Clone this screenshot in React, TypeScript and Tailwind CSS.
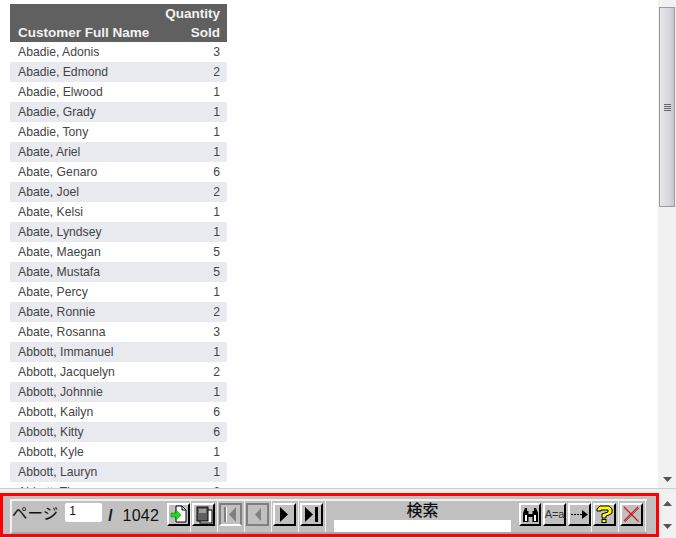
const rows: [string, number][] = [
  ["Abadie, Adonis", 3], ["Abadie, Edmond", 2], ["Abadie, Elwood", 1], ["Abadie, Grady", 1], ["Abadie, Tony", 1],
  ["Abate, Ariel", 1], ["Abate, Genaro", 6], ["Abate, Joel", 2], ["Abate, Kelsi", 1], ["Abate, Lyndsey", 1],
  ["Abate, Maegan", 5], ["Abate, Mustafa", 5], ["Abate, Percy", 1], ["Abate, Ronnie", 2], ["Abate, Rosanna", 3],
  ["Abbott, Immanuel", 1], ["Abbott, Jacquelyn", 2], ["Abbott, Johnnie", 1], ["Abbott, Kailyn", 6], ["Abbott, Kitty", 6],
  ["Abbott, Kyle", 1], ["Abbott, Lauryn", 1], ["Abbott, Thomas", 6],
];

function Btn({ children, disabled, pressed }: { children: React.ReactNode; disabled?: boolean; pressed?: boolean }) {
  const cls = pressed
    ? "border-2 border-[#808080]"
    : disabled
      ? "border-2 border-t-[#808080] border-l-[#808080] border-r-[#808080] border-b-white"
      : "border-2 border-t-white border-l-white border-r-black border-b-black";
  return (
    <div className={`w-[23px] h-[23px] flex items-center justify-center bg-[#c0c0c0] ${cls}`}>{children}</div>
  );
}

function Sep({ w, children }: { w: string; children: React.ReactNode }) {
  return <div className={`${w} h-full border-r border-r-[#f0f0f0] flex items-start justify-end pt-[2px] pr-[2px] shrink-0`}>{children}</div>;
}

export default function App() {
  return (
    <div className="w-[676px] h-[538px] overflow-hidden bg-white flex flex-col font-['Liberation_Sans',sans-serif]">
      <div className="h-[488px] flex overflow-hidden shrink-0">
        <div className="flex-1 pl-[10px] pt-[4px] overflow-hidden">
          <table className="w-[217px] border-collapse text-[12.2px] text-[#444]">
            <thead>
              <tr className="bg-[#606060] text-[#f2f2f2] text-[13.5px] leading-[19px] h-[38px]">
                <th className="pl-[8px] text-left align-bottom font-bold">Customer Full Name</th>
                <th className="pr-[7px] text-right align-bottom font-bold">Quantity<br />Sold</th>
              </tr>
            </thead>
            <tbody>
              {rows.map(([n, q], i) => (
                <tr key={n} className={`h-[20px] ${i % 2 ? "bg-[#e9e9f0]" : "bg-white"}`}>
                  <td className="pl-[8px]">{n}</td>
                  <td className="pr-[7px] text-right">{q}</td>
                </tr>
              ))}
            </tbody>
          </table>
        </div>
        <div className="w-[18px] bg-[#f1f1f1] flex flex-col items-center pt-[7px]">
          <div className="w-[16px] h-[200px] shrink-0 bg-[linear-gradient(90deg,#e6e6ea,#d8d8de_60%,#c6c6cc)] border border-[#9a9a9a] flex flex-col gap-[1px] items-center justify-center">
            <div className="w-[7px] h-[1px] bg-[#666]" /><div className="w-[7px] h-[1px] bg-[#666]" /><div className="w-[7px] h-[1px] bg-[#666]" /><div className="w-[7px] h-[1px] bg-[#666]" />
          </div>
          <div className="flex-1 flex items-end pb-[6px]">
            <svg width="9" height="5"><path d="M0 0h9L4.500 5z" fill="#555" /></svg>
          </div>
        </div>
      </div>
      <div className="h-[5px] shrink-0 bg-[#efefef] border-t border-t-[#cfcfcf]" />
      <div className="flex flex-1 min-h-0">
        <div className="w-[659px] h-[44px] border-[3px] border-[#fe0000] bg-[#c0c0c0] pl-[7px] pt-[3px]">
          <div className="h-[35px] w-[637px] border-t-2 border-l-2 border-t-[#f0f0f0] border-l-[#f0f0f0] border-b-2 border-b-[#a8a8a8] flex items-stretch">
            <div className="w-[154px] flex items-start text-[#111] shrink-0 font-['Noto_Sans_CJK_JP',sans-serif]">
              <span className="text-[15.5px] leading-[22px]">ページ</span>
              <div className="ml-[7px] mt-[2px] w-[37px] h-[19px] bg-white rounded-[2px] text-[12px] leading-[17px] pl-[4px] font-['Liberation_Sans',sans-serif]">1</div>
              <span className="ml-[6px] text-[16px] leading-[30px] tracking-[0.3px] whitespace-pre font-['Liberation_Sans',sans-serif]"><b>/</b>  1042</span>
            </div>
            <Sep w="w-[25px]">
              <div className="mr-[-2px]">
                <Btn>
                  <svg width="17" height="19" viewBox="0 0 17 19"><path d="M6 1h6l4 4v12H6z" fill="#fff" stroke="#000" /><path d="M12 1v4h4" fill="none" stroke="#000" /><path d="M1 8h5V5l5 5-5 5v-3H1z" fill="#14e014" stroke="#0a7a0a" strokeWidth=".5" /></svg>
                </Btn>
              </div>
            </Sep>
            <Sep w="w-[27px]">
              <Btn>
                <svg width="18" height="18" viewBox="0 0 18 18"><rect x="5" y="4" width="12" height="13" fill="#fff" stroke="#000" /><rect x="2" y="1" width="11" height="14" fill="#606060" stroke="#000" /><path d="M4 4h7M4 6h7" stroke="#ddd" /></svg>
              </Btn>
            </Sep>
            <Sep w="w-[27px]">
              <Btn disabled>
                <svg width="17" height="17" viewBox="0 0 17 17"><rect x="2" y="1" width="2" height="15" fill="#808080" /><rect x="4" y="1" width="1" height="15" fill="#fff" /><path d="M14 1v15L7 8.500z" fill="#808080" /></svg>
              </Btn>
            </Sep>
            <Sep w="w-[27px]">
              <Btn pressed>
                <svg width="17" height="17" viewBox="0 0 17 17"><path d="M12 2v13L6 8.500z" fill="#808080" /></svg>
              </Btn>
            </Sep>
            <Sep w="w-[27px]">
              <Btn>
                <svg width="17" height="17" viewBox="0 0 17 17"><path d="M4 1v15l8-7.500z" fill="#000" /></svg>
              </Btn>
            </Sep>
            <Sep w="w-[27px]">
              <Btn>
                <svg width="17" height="17" viewBox="0 0 17 17"><path d="M2 1v15l8-7.500z" fill="#000" /><rect x="12" y="1" width="3" height="15" fill="#000" /></svg>
              </Btn>
            </Sep>
            <div className="w-[193px] flex flex-col items-center shrink-0">
              <div className="h-[21px] text-[16px] leading-[16px] font-medium font-['Noto_Sans_CJK_JP',sans-serif] text-[#111]">検索</div>
              <div className="w-[177px] h-[13px] bg-white" />
            </div>
            <div className="w-[73px] flex gap-[2px] pt-[2px] shrink-0 border-r border-r-[#f0f0f0]">
              <Btn>
                <svg width="17" height="17" viewBox="0 0 17 17"><path d="M3 2h2v3h1.500v11H1V7zM12 2h2l2 5v9h-5.500V5H12z" fill="#000" /><rect x="6" y="8" width="5" height="3" fill="#000" /><rect x="3" y="9" width="2" height="6" fill="#fff" /><rect x="12" y="9" width="2" height="6" fill="#fff" /></svg>
              </Btn>
              <Btn>
                <span className="text-[11px] leading-none text-[#333] tracking-[-0.2px]">A=a</span>
              </Btn>
              <Btn>
                <svg width="19" height="11" viewBox="0 0 19 11"><path d="M1 5.500h11" stroke="#000" strokeDasharray="2 1" /><path d="M12 1l6 4.500-6 4.500z" fill="#000" /></svg>
              </Btn>
            </div>
            <Sep w="w-[27px]">
              <Btn>
                <svg width="19" height="19" viewBox="0 0 19 19"><path d="M2 6V4l3-3h9l3 3v4l-3 2-3 1v2H7V9l6-2V5H6v1z" fill="#ffff00" stroke="#000" /><rect x="7" y="14.500" width="4" height="3" fill="#ffff00" stroke="#000" /></svg>
              </Btn>
            </Sep>
            <Sep w="w-[27px]">
              <Btn>
                <svg width="17" height="17" viewBox="0 0 17 17"><path d="M2 2l14 14M16 2L2 16" stroke="#606060" strokeWidth="1" /><path d="M1 1l14 14M15 1L1 15" stroke="#e01010" strokeWidth="1.300" /></svg>
              </Btn>
            </Sep>
          </div>
        </div>
        <div className="w-[17px] bg-[#f1f1f1] flex flex-col items-center justify-between pt-[8px] pb-[9px]">
          <svg width="9" height="5"><path d="M0 5h9L4.500 0z" fill="#555" /></svg>
          <svg width="9" height="5"><path d="M0 0h9L4.500 5z" fill="#555" /></svg>
        </div>
      </div>
    </div>
  );
}
